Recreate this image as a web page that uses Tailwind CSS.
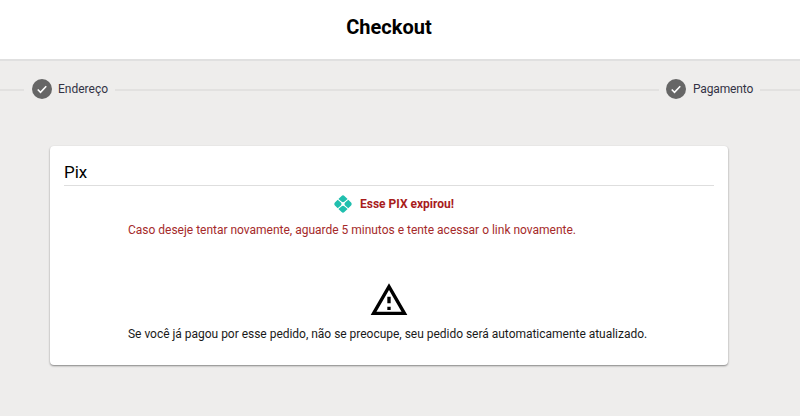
<!DOCTYPE html>
<html lang="pt-BR">
<head>
    <meta charset="UTF-8">
    <meta name="viewport" content="width=device-width, initial-scale=1.0">
    <title>Checkout</title>
    <script src="https://cdn.jsdelivr.net/npm/@tailwindcss/browser@4"></script>
</head>
<body class="bg-[#eeedec] h-[416px] overflow-hidden font-['Roboto',sans-serif]">
    <header class="h-[61px] bg-white border-b-2 border-[#e0e0e0] flex items-center justify-center pb-[5px] pr-[22px]">
        <h1 class="text-[20px] font-bold text-black">Checkout</h1>
    </header>

    <!-- stepper -->
    <div class="flex items-center h-[20px] mt-[18px] text-[12px] text-[#333345]">
        <div class="w-[24px] h-[2px] mt-[2px] bg-[#e2e1e0]"></div>
        <div class="w-[20px] h-[20px] rounded-full bg-[#666] ml-[8px] flex items-center justify-center">
            <svg width="12" height="12" viewBox="0 0 24 24" fill="none" stroke="white" stroke-width="3.2"><path d="M3.5 13l5.5 5.5L20.5 6.5"/></svg>
        </div>
        <span class="ml-[6px] w-[50px]">Endereço</span>
        <div class="flex-1 h-[2px] mt-[2px] bg-[#e2e1e0] ml-[7px] mr-[7px]"></div>
        <div class="w-[20px] h-[20px] rounded-full bg-[#666] flex items-center justify-center">
            <svg width="12" height="12" viewBox="0 0 24 24" fill="none" stroke="white" stroke-width="3.2"><path d="M3.5 13l5.5 5.5L20.5 6.5"/></svg>
        </div>
        <span class="ml-[7px] w-[60px] tracking-[-0.15px]">Pagamento</span>
        <div class="w-[40px] h-[2px] mt-[2px] bg-[#e2e1e0] ml-[7px]"></div>
    </div>

    <!-- card -->
    <main class="ml-[50px] mr-[72px] mt-[47px] h-[219px] bg-white rounded-[4px] shadow-[0_1px_2px_rgba(0,0,0,0.45)] px-[14px]">
        <h2 class="h-[40px] pt-[14px] text-[17px] leading-[24px] font-[450] text-black border-b border-[#dedede]">Pix</h2>
        <div class="flex items-center justify-center mt-[8px] h-[20px] gap-[8px] pl-[10px]">
            <svg width="18" height="18" viewBox="0 0 18 18" fill="#20bfae">
                <path d="M9 0.2C9.6 0.2 10 0.5 10.4 0.9L13.6 4.1 10.6 6.6C9.7 7.4 8.3 7.4 7.4 6.6L4.4 4.1 7.6 0.9C8 0.5 8.4 0.2 9 0.2Z"/>
                <path d="M9 17.8C9.6 17.8 10 17.5 10.4 17.1L13.6 13.9 10.6 11.4C9.7 10.6 8.3 10.6 7.4 11.4L4.4 13.9 7.6 17.1C8 17.5 8.4 17.8 9 17.8Z"/>
                <path d="M3.7 4.7L6.9 7.6C7.7 8.4 7.7 9.6 6.9 10.4L3.7 13.3 0.9 10.4C0.1 9.6 0.1 8.4 0.9 7.6Z"/>
                <path d="M14.3 4.7L11.1 7.6C10.3 8.4 10.3 9.6 11.1 10.4L14.3 13.3 17.1 10.4C17.9 9.6 17.9 8.4 17.1 7.6Z"/>
            </svg>
            <span class="text-[12px] font-bold text-[#a81c1c]">Esse PIX expirou!</span>
        </div>
        <p class="mt-[6px] ml-[64px] text-[12px] leading-[20px] tracking-[-0.01px] text-[#a52a2a]">Caso deseje tentar novamente, aguarde 5 minutos e tente acessar o link novamente.</p>
        <div class="flex justify-center mt-[40px]">
            <svg width="40" height="40" viewBox="0 0 24 24" fill="black">
                <path d="M12 5.99L19.53 19H4.47L12 5.99M12 2L1 21h22L12 2zm1 14h-2v2h2v-2zm0-6h-2v4h2v-4z"/>
            </svg>
        </div>
        <p class="mt-[4px] ml-[64px] text-[12px] leading-[20px] tracking-[-0.02px] text-[#1a1a1a]">Se você já pagou por esse pedido, não se preocupe, seu pedido será automaticamente atualizado.</p>
    </main>
</body>
</html>
